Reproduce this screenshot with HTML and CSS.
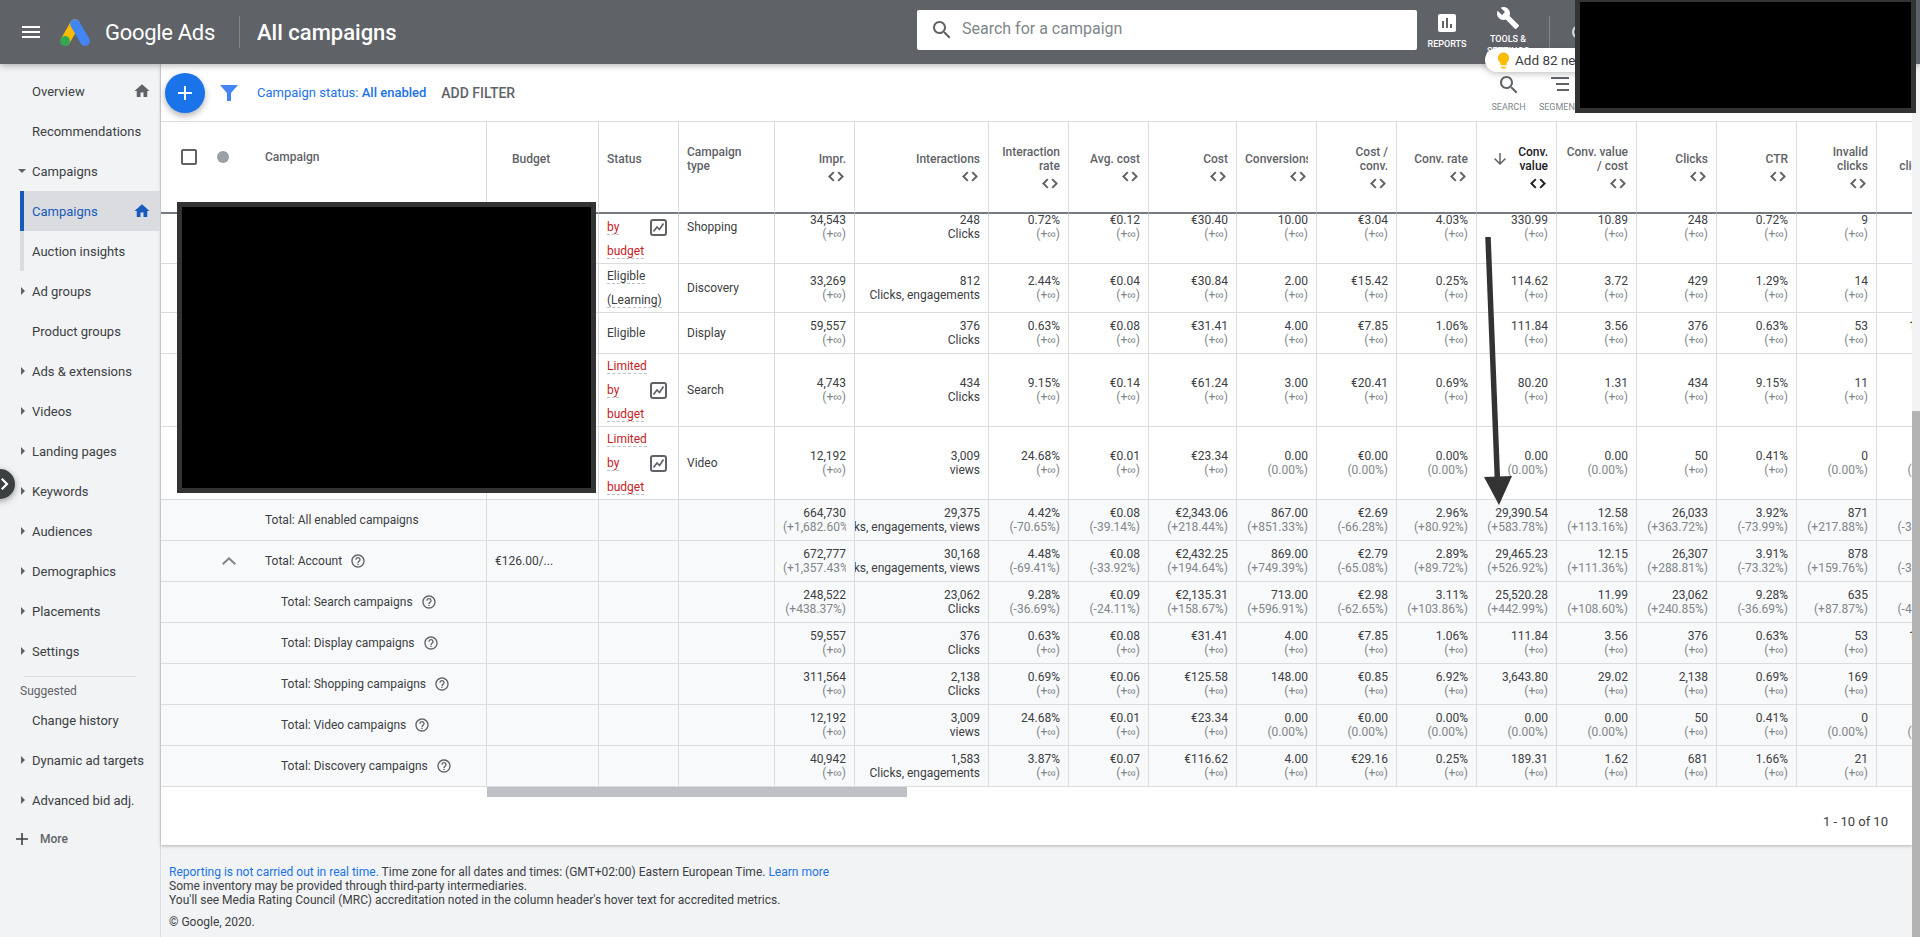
FILE: index.html
```html
<!DOCTYPE html>
<html>
<head>
<meta charset="utf-8">
<title>All campaigns</title>
<link rel="stylesheet" href="styles.css">
</head>
<body>
<svg class="defs">
  <symbol id="i-home" viewBox="0 0 24 24"><path d="M10 20v-6h4v6h5v-8h3L12 3 2 12h3v8z"/></symbol>
  <symbol id="i-help" viewBox="0 0 24 24"><path d="M11 18h2v-2h-2v2zm1-16C6.48 2 2 6.48 2 12s4.48 10 10 10 10-4.48 10-10S17.52 2 12 2zm0 18c-4.41 0-8-3.59-8-8s3.59-8 8-8 8 3.59 8 8-3.59 8-8 8zm0-14c-2.21 0-4 1.79-4 4h2c0-1.1.9-2 2-2s2 .9 2 2c0 2-3 1.75-3 5h2c0-2.25 3-2.5 3-5 0-2.21-1.79-4-4-4z"/></symbol>
  <symbol id="i-search" viewBox="0 0 24 24"><path d="M15.5 14h-.79l-.28-.27C15.41 12.59 16 11.11 16 9.5 16 5.91 13.09 3 9.5 3S3 5.91 3 9.5 5.91 16 9.5 16c1.61 0 3.09-.59 4.23-1.57l.27.28v.79l5 4.99L20.49 19l-4.99-5zm-6 0C7.01 14 5 11.99 5 9.5S7.01 5 9.5 5 14 7.01 14 9.5 11.99 14 9.5 14z"/></symbol>
  <symbol id="i-sort" viewBox="0 0 16 10"><path d="M6 1L2 5l4 4M10 1l4 4-4 4" fill="none" stroke="currentColor" stroke-width="1.8"/></symbol>
  <symbol id="i-trend" viewBox="0 0 17 17"><rect x="1" y="1" width="15" height="15" rx="2" fill="none" stroke="currentColor" stroke-width="2"/><path d="M3.500 12.500l3.500-4.500 2.500 2.500 4-6" fill="none" stroke="currentColor" stroke-width="1.700"/></symbol>
</svg>

<header class="topbar">
  <svg class="burger" viewBox="0 0 18 12"><path d="M0 0h18v2H0zM0 5h18v2H0zM0 10h18v2H0z" fill="#fff"/></svg>
  <svg class="logo" viewBox="0 0 30 27">
    <path d="M15 5L5.500 21.500" stroke="#fbbc04" stroke-width="9.600" stroke-linecap="round"/>
    <path d="M15 5l10 17" stroke="#4285f4" stroke-width="9.600" stroke-linecap="round"/>
    <circle cx="5" cy="22" r="5" fill="#34a853"/>
  </svg>
  <span class="wordmark">Google Ads</span>
  <span class="topbar-sep"></span>
  <span class="page-title">All campaigns</span>
  <div class="searchbox">
    <svg class="searchbox-icon"><use href="#i-search"/></svg>
    <span class="searchbox-text">Search for a campaign</span>
  </div>
  <div class="top-tool">
    <svg class="top-icon" viewBox="0 0 24 24"><path d="M19 3H5c-1.100 0-2 .9-2 2v14c0 1.100.9 2 2 2h14c1.100 0 2-.9 2-2V5c0-1.100-.9-2-2-2zM9 17H7v-7h2v7zm4 0h-2V7h2v10zm4 0h-2v-4h2v4z"/></svg>
    <span>REPORTS</span>
  </div>
  <div class="top-tool top-tool-wide">
    <svg class="wrench" viewBox="0 0 24 24"><path d="M22.7 19l-9.100-9.100c.9-2.300.4-5-1.500-6.900-2-2-5-2.400-7.400-1.300L9 6 6 9 1.600 4.700C.4 7.100.9 10.100 2.900 12.100c1.900 1.900 4.600 2.400 6.900 1.500l9.100 9.100c.4.4 1 .4 1.400 0l2.300-2.300c.5-.4.5-1.100.1-1.400z"/></svg>
    <span>TOOLS &amp;<br>SETTINGS</span>
  </div>
  <span class="topbar-sep topbar-sep-right"></span>
  <span class="top-circle"></span>
</header>

<div class="tip">
  <svg class="tip-bulb" viewBox="0 0 24 24"><path d="M9 21c0 .5.4 1 1 1h4c.6 0 1-.5 1-1v-1H9v1zm3-19C8.100 2 5 5.100 5 9c0 2.400 1.200 4.500 3 5.700V17c0 .5.4 1 1 1h6c.6 0 1-.5 1-1v-2.300c1.800-1.300 3-3.400 3-5.700 0-3.900-3.100-7-7-7z"/></svg>
  Add 82 new keywords
</div>

<div class="below">
  <nav class="sidebar">
    <a class="nav-item">Overview<svg class="nav-home"><use href="#i-home"/></svg></a>
    <a class="nav-item">Recommendations</a>
    <a class="nav-item"><span class="caret caret-down"></span>Campaigns</a>
    <a class="nav-item nav-sub nav-active">Campaigns<svg class="nav-home"><use href="#i-home"/></svg></a>
    <a class="nav-item nav-sub">Auction insights</a>
    <a class="nav-item"><span class="caret"></span>Ad groups</a>
    <a class="nav-item">Product groups</a>
    <a class="nav-item"><span class="caret"></span>Ads &amp; extensions</a>
    <a class="nav-item"><span class="caret"></span>Videos</a>
    <a class="nav-item"><span class="caret"></span>Landing pages</a>
    <a class="nav-item"><span class="caret"></span>Keywords</a>
    <a class="nav-item"><span class="caret"></span>Audiences</a>
    <a class="nav-item"><span class="caret"></span>Demographics</a>
    <a class="nav-item"><span class="caret"></span>Placements</a>
    <a class="nav-item"><span class="caret"></span>Settings</a>
    <div class="nav-divider"></div>
    <div class="nav-title">Suggested</div>
    <a class="nav-item">Change history</a>
    <a class="nav-item"><span class="caret"></span>Dynamic ad targets</a>
    <a class="nav-item"><span class="caret"></span>Advanced bid adj.</a>
    <a class="nav-more"><svg class="nav-plus" viewBox="0 0 12 12"><path d="M5.200 0h1.600v5.200H12v1.600H6.800V12H5.200V6.800H0V5.200h5.200z"/></svg>More</a>
  </nav>

  <main class="main">
    <section class="card">
      <div class="toolbar">
        <span class="fab"><svg viewBox="0 0 14 14"><path d="M6 0h2v6h6v2H8v6H6V8H0V6h6z" fill="#fff"/></svg></span>
        <svg class="funnel" viewBox="0 0 18 16"><path d="M0 0h18l-7 8v8H7V8z"/></svg>
        <span class="filter-text">Campaign status: <b>All enabled</b></span>
        <span class="add-filter">ADD FILTER</span>
        <div class="toolbar-tools">
          <div class="tool"><svg class="tool-icon"><use href="#i-search"/></svg><span>SEARCH</span></div>
          <div class="tool"><svg class="tool-icon" viewBox="0 0 24 24"><path d="M3 4h18v2H3zM8 10h13v2H8zM9 16h12v2H9z"/></svg><span>SEGMENT</span></div>
        </div>
      </div>

      <div class="table-wrap">
        <table class="grid grid-head">
          <colgroup><col class="c-campaign"><col class="c-budget"><col class="c-status"><col class="c-type"><col class="c-num"><col class="c-inter"><col class="c-num"><col class="c-num"><col class="c-cost"><col class="c-num"><col class="c-num"><col class="c-num"><col class="c-num"><col class="c-num"><col class="c-num"><col class="c-num"><col class="c-num"><col class="c-num"></colgroup>
          <tr>
            <th class="th-campaign"><div class="th-select"><span class="checkbox"></span><span class="dot"></span>Campaign</div></th>
            <th class="th-budget"><div class="th-label">Budget</div><div class="sort-gap"></div></th>
            <th class="th-left"><div class="th-label">Status</div><div class="sort-gap"></div></th>
            <th class="th-left"><div class="th-label">Campaign<br>type</div><div class="sort-gap"></div></th>
            <th><div class="th-label">Impr.</div><svg class="sort"><use href="#i-sort"/></svg></th>
            <th><div class="th-label">Interactions</div><svg class="sort"><use href="#i-sort"/></svg></th>
            <th><div class="th-label">Interaction<br>rate</div><svg class="sort"><use href="#i-sort"/></svg></th>
            <th><div class="th-label">Avg. cost</div><svg class="sort"><use href="#i-sort"/></svg></th>
            <th><div class="th-label">Cost</div><svg class="sort"><use href="#i-sort"/></svg></th>
            <th><div class="th-label">Conversions</div><svg class="sort"><use href="#i-sort"/></svg></th>
            <th><div class="th-label">Cost /<br>conv.</div><svg class="sort"><use href="#i-sort"/></svg></th>
            <th><div class="th-label">Conv. rate</div><svg class="sort"><use href="#i-sort"/></svg></th>
            <th class="th-sorted"><svg class="sort-arrow" viewBox="0 0 24 24"><path d="M20 12l-1.410-1.410L13 16.170V4h-2v12.170l-5.580-5.590L4 12l8 8 8-8z"/></svg><div class="th-label">Conv.<br>value</div><svg class="sort"><use href="#i-sort"/></svg></th>
            <th><div class="th-label">Conv. value<br>/ cost</div><svg class="sort"><use href="#i-sort"/></svg></th>
            <th><div class="th-label">Clicks</div><svg class="sort"><use href="#i-sort"/></svg></th>
            <th><div class="th-label">CTR</div><svg class="sort"><use href="#i-sort"/></svg></th>
            <th><div class="th-label">Invalid<br>clicks</div><svg class="sort"><use href="#i-sort"/></svg></th>
            <th><div class="th-label">Invalid<br>click rate</div><svg class="sort"><use href="#i-sort"/></svg></th>
          </tr>
        </table>

        <div class="rows-scroll">
          <table class="grid grid-rows">
            <colgroup><col class="c-campaign"><col class="c-budget"><col class="c-status"><col class="c-type"><col class="c-num"><col class="c-inter"><col class="c-num"><col class="c-num"><col class="c-cost"><col class="c-num"><col class="c-num"><col class="c-num"><col class="c-num"><col class="c-num"><col class="c-num"><col class="c-num"><col class="c-num"><col class="c-num"></colgroup>
            <tr class="row-tall">
              <td></td><td></td>
              <td class="status"><div class="status-in"><span class="status-words"><u class="bad">Limited</u> <u class="bad">by</u> <u class="bad">budget</u></span><svg class="trend"><use href="#i-trend"/></svg></div></td>
              <td class="type">Shopping</td>
              <td><p>34,543</p><small>(+<i>∞</i>)</small></td>
              <td class="inter"><p>248</p><span class="unit">Clicks</span></td>
              <td><p>0.72%</p><small>(+<i>∞</i>)</small></td>
              <td><p>€0.12</p><small>(+<i>∞</i>)</small></td>
              <td><p>€30.40</p><small>(+<i>∞</i>)</small></td>
              <td><p>10.00</p><small>(+<i>∞</i>)</small></td>
              <td><p>€3.04</p><small>(+<i>∞</i>)</small></td>
              <td><p>4.03%</p><small>(+<i>∞</i>)</small></td>
              <td><p>330.99</p><small>(+<i>∞</i>)</small></td>
              <td><p>10.89</p><small>(+<i>∞</i>)</small></td>
              <td><p>248</p><small>(+<i>∞</i>)</small></td>
              <td><p>0.72%</p><small>(+<i>∞</i>)</small></td>
              <td><p>9</p><small>(+<i>∞</i>)</small></td>
              <td><p>3.50%</p><small>(+<i>∞</i>)</small></td>
            </tr>
            <tr class="row-two">
              <td></td><td></td>
              <td class="status"><div class="status-in"><span class="status-words status-words-wide"><u>Eligible</u> <u>(Learning)</u></span></div></td>
              <td class="type">Discovery</td>
              <td><p>33,269</p><small>(+<i>∞</i>)</small></td>
              <td class="inter"><p>812</p><span class="unit">Clicks, engagements</span></td>
              <td><p>2.44%</p><small>(+<i>∞</i>)</small></td>
              <td><p>€0.04</p><small>(+<i>∞</i>)</small></td>
              <td><p>€30.84</p><small>(+<i>∞</i>)</small></td>
              <td><p><u>2.00</u></p><small>(+<i>∞</i>)</small></td>
              <td><p><u>€15.42</u></p><small>(+<i>∞</i>)</small></td>
              <td><p><u>0.25%</u></p><small>(+<i>∞</i>)</small></td>
              <td><p><u>114.62</u></p><small>(+<i>∞</i>)</small></td>
              <td><p><u>3.72</u></p><small>(+<i>∞</i>)</small></td>
              <td><p>429</p><small>(+<i>∞</i>)</small></td>
              <td><p>1.29%</p><small>(+<i>∞</i>)</small></td>
              <td><p>14</p><small>(+<i>∞</i>)</small></td>
              <td><p>3.16%</p><small>(+<i>∞</i>)</small></td>
            </tr>
            <tr class="row-short">
              <td></td><td></td>
              <td class="type">Eligible</td>
              <td class="type">Display</td>
              <td><p>59,557</p><small>(+<i>∞</i>)</small></td>
              <td class="inter"><p>376</p><span class="unit">Clicks</span></td>
              <td><p>0.63%</p><small>(+<i>∞</i>)</small></td>
              <td><p>€0.08</p><small>(+<i>∞</i>)</small></td>
              <td><p>€31.41</p><small>(+<i>∞</i>)</small></td>
              <td><p><u>4.00</u></p><small>(+<i>∞</i>)</small></td>
              <td><p><u>€7.85</u></p><small>(+<i>∞</i>)</small></td>
              <td><p><u>1.06%</u></p><small>(+<i>∞</i>)</small></td>
              <td><p><u>111.84</u></p><small>(+<i>∞</i>)</small></td>
              <td><p><u>3.56</u></p><small>(+<i>∞</i>)</small></td>
              <td><p>376</p><small>(+<i>∞</i>)</small></td>
              <td><p>0.63%</p><small>(+<i>∞</i>)</small></td>
              <td><p>53</p><small>(+<i>∞</i>)</small></td>
              <td><p>12.35%</p><small>(+<i>∞</i>)</small></td>
            </tr>
            <tr class="row-tall">
              <td></td><td></td>
              <td class="status"><div class="status-in"><span class="status-words"><u class="bad">Limited</u> <u class="bad">by</u> <u class="bad">budget</u></span><svg class="trend"><use href="#i-trend"/></svg></div></td>
              <td class="type">Search</td>
              <td><p>4,743</p><small>(+<i>∞</i>)</small></td>
              <td class="inter"><p>434</p><span class="unit">Clicks</span></td>
              <td><p>9.15%</p><small>(+<i>∞</i>)</small></td>
              <td><p>€0.14</p><small>(+<i>∞</i>)</small></td>
              <td><p>€61.24</p><small>(+<i>∞</i>)</small></td>
              <td><p>3.00</p><small>(+<i>∞</i>)</small></td>
              <td><p>€20.41</p><small>(+<i>∞</i>)</small></td>
              <td><p>0.69%</p><small>(+<i>∞</i>)</small></td>
              <td><p>80.20</p><small>(+<i>∞</i>)</small></td>
              <td><p>1.31</p><small>(+<i>∞</i>)</small></td>
              <td><p>434</p><small>(+<i>∞</i>)</small></td>
              <td><p>9.15%</p><small>(+<i>∞</i>)</small></td>
              <td><p>11</p><small>(+<i>∞</i>)</small></td>
              <td><p>2.47%</p><small>(+<i>∞</i>)</small></td>
            </tr>
            <tr class="row-tall">
              <td></td><td></td>
              <td class="status"><div class="status-in"><span class="status-words"><u class="bad">Limited</u> <u class="bad">by</u> <u class="bad">budget</u></span><svg class="trend"><use href="#i-trend"/></svg></div></td>
              <td class="type">Video</td>
              <td><p>12,192</p><small>(+<i>∞</i>)</small></td>
              <td class="inter"><p>3,009</p><span class="unit">views</span></td>
              <td><p>24.68%</p><small>(+<i>∞</i>)</small></td>
              <td><p>€0.01</p><small>(+<i>∞</i>)</small></td>
              <td><p>€23.34</p><small>(+<i>∞</i>)</small></td>
              <td><p>0.00</p><small>(0.00%)</small></td>
              <td><p>€0.00</p><small>(0.00%)</small></td>
              <td><p>0.00%</p><small>(0.00%)</small></td>
              <td><p>0.00</p><small>(0.00%)</small></td>
              <td><p>0.00</p><small>(0.00%)</small></td>
              <td><p>50</p><small>(+<i>∞</i>)</small></td>
              <td><p>0.41%</p><small>(+<i>∞</i>)</small></td>
              <td><p>0</p><small>(0.00%)</small></td>
              <td><p>0.00%</p><small>(0.00%)</small></td>
            </tr>
          </table>
        </div>

        <table class="grid grid-totals">
          <colgroup><col class="c-campaign"><col class="c-budget"><col class="c-status"><col class="c-type"><col class="c-num"><col class="c-inter"><col class="c-num"><col class="c-num"><col class="c-cost"><col class="c-num"><col class="c-num"><col class="c-num"><col class="c-num"><col class="c-num"><col class="c-num"><col class="c-num"><col class="c-num"><col class="c-num"></colgroup>
          <tr class="row-short">
            <td class="total-name">Total: All enabled campaigns</td><td></td><td></td><td></td>
            <td><p>664,730</p><small>(+1,682.60%)</small></td>
            <td class="inter"><p>29,375</p><span class="unit unit-clip"><span>Clicks, engagements, views</span></span></td>
            <td><p>4.42%</p><small>(-70.65%)</small></td>
            <td><p>€0.08</p><small>(-39.14%)</small></td>
            <td><p>€2,343.06</p><small>(+218.44%)</small></td>
            <td><p>867.00</p><small>(+851.33%)</small></td>
            <td><p>€2.69</p><small>(-66.28%)</small></td>
            <td><p>2.96%</p><small>(+80.92%)</small></td>
            <td><p>29,390.54</p><small>(+583.78%)</small></td>
            <td><p>12.58</p><small>(+113.16%)</small></td>
            <td><p>26,033</p><small>(+363.72%)</small></td>
            <td><p>3.92%</p><small>(-73.99%)</small></td>
            <td><p>871</p><small>(+217.88%)</small></td>
            <td><p>3.24%</p><small>(-31.24%)</small></td>
          </tr>
          <tr class="row-short">
            <td class="total-name"><div class="total-in"><svg class="collapse" viewBox="0 0 14 8"><path d="M7 0L0 6.600 1.400 8 7 2.800 12.600 8 14 6.600z"/></svg>Total: Account<svg class="help"><use href="#i-help"/></svg></div></td>
            <td class="budget">€126.00/...</td><td></td><td></td>
            <td><p>672,777</p><small>(+1,357.43%)</small></td>
            <td class="inter"><p>30,168</p><span class="unit unit-clip"><span>Clicks, engagements, views</span></span></td>
            <td><p>4.48%</p><small>(-69.41%)</small></td>
            <td><p>€0.08</p><small>(-33.92%)</small></td>
            <td><p>€2,432.25</p><small>(+194.64%)</small></td>
            <td><p><u>869.00</u></p><small>(+749.39%)</small></td>
            <td><p><u>€2.79</u></p><small>(-65.08%)</small></td>
            <td><p><u>2.89%</u></p><small>(+89.72%)</small></td>
            <td><p><u>29,465.23</u></p><small>(+526.92%)</small></td>
            <td><p><u>12.15</u></p><small>(+111.36%)</small></td>
            <td><p>26,307</p><small>(+288.81%)</small></td>
            <td><p>3.91%</p><small>(-73.32%)</small></td>
            <td><p>878</p><small>(+159.76%)</small></td>
            <td><p>3.23%</p><small>(-38.31%)</small></td>
          </tr>
          <tr class="row-short">
            <td class="total-name total-sub"><div class="total-in">Total: Search campaigns<svg class="help"><use href="#i-help"/></svg></div></td><td></td><td></td><td></td>
            <td><p>248,522</p><small>(+438.37%)</small></td>
            <td class="inter"><p>23,062</p><span class="unit">Clicks</span></td>
            <td><p>9.28%</p><small>(-36.69%)</small></td>
            <td><p>€0.09</p><small>(-24.11%)</small></td>
            <td><p>€2,135.31</p><small>(+158.67%)</small></td>
            <td><p>713.00</p><small>(+596.91%)</small></td>
            <td><p>€2.98</p><small>(-62.65%)</small></td>
            <td><p>3.11%</p><small>(+103.86%)</small></td>
            <td><p>25,520.28</p><small>(+442.99%)</small></td>
            <td><p>11.99</p><small>(+108.60%)</small></td>
            <td><p>23,062</p><small>(+240.85%)</small></td>
            <td><p>9.28%</p><small>(-36.69%)</small></td>
            <td><p>635</p><small>(+87.87%)</small></td>
            <td><p>2.68%</p><small>(-44.93%)</small></td>
          </tr>
          <tr class="row-short">
            <td class="total-name total-sub"><div class="total-in">Total: Display campaigns<svg class="help"><use href="#i-help"/></svg></div></td><td></td><td></td><td></td>
            <td><p>59,557</p><small>(+<i>∞</i>)</small></td>
            <td class="inter"><p>376</p><span class="unit">Clicks</span></td>
            <td><p>0.63%</p><small>(+<i>∞</i>)</small></td>
            <td><p>€0.08</p><small>(+<i>∞</i>)</small></td>
            <td><p>€31.41</p><small>(+<i>∞</i>)</small></td>
            <td><p>4.00</p><small>(+<i>∞</i>)</small></td>
            <td><p>€7.85</p><small>(+<i>∞</i>)</small></td>
            <td><p>1.06%</p><small>(+<i>∞</i>)</small></td>
            <td><p>111.84</p><small>(+<i>∞</i>)</small></td>
            <td><p>3.56</p><small>(+<i>∞</i>)</small></td>
            <td><p>376</p><small>(+<i>∞</i>)</small></td>
            <td><p>0.63%</p><small>(+<i>∞</i>)</small></td>
            <td><p>53</p><small>(+<i>∞</i>)</small></td>
            <td><p>12.35%</p><small>(+<i>∞</i>)</small></td>
          </tr>
          <tr class="row-short">
            <td class="total-name total-sub"><div class="total-in">Total: Shopping campaigns<svg class="help"><use href="#i-help"/></svg></div></td><td></td><td></td><td></td>
            <td><p>311,564</p><small>(+<i>∞</i>)</small></td>
            <td class="inter"><p>2,138</p><span class="unit">Clicks</span></td>
            <td><p>0.69%</p><small>(+<i>∞</i>)</small></td>
            <td><p>€0.06</p><small>(+<i>∞</i>)</small></td>
            <td><p>€125.58</p><small>(+<i>∞</i>)</small></td>
            <td><p>148.00</p><small>(+<i>∞</i>)</small></td>
            <td><p>€0.85</p><small>(+<i>∞</i>)</small></td>
            <td><p>6.92%</p><small>(+<i>∞</i>)</small></td>
            <td><p>3,643.80</p><small>(+<i>∞</i>)</small></td>
            <td><p>29.02</p><small>(+<i>∞</i>)</small></td>
            <td><p>2,138</p><small>(+<i>∞</i>)</small></td>
            <td><p>0.69%</p><small>(+<i>∞</i>)</small></td>
            <td><p>169</p><small>(+<i>∞</i>)</small></td>
            <td><p>7.33%</p><small>(+<i>∞</i>)</small></td>
          </tr>
          <tr class="row-short">
            <td class="total-name total-sub"><div class="total-in">Total: Video campaigns<svg class="help"><use href="#i-help"/></svg></div></td><td></td><td></td><td></td>
            <td><p>12,192</p><small>(+<i>∞</i>)</small></td>
            <td class="inter"><p>3,009</p><span class="unit">views</span></td>
            <td><p>24.68%</p><small>(+<i>∞</i>)</small></td>
            <td><p>€0.01</p><small>(+<i>∞</i>)</small></td>
            <td><p>€23.34</p><small>(+<i>∞</i>)</small></td>
            <td><p>0.00</p><small>(0.00%)</small></td>
            <td><p>€0.00</p><small>(0.00%)</small></td>
            <td><p>0.00%</p><small>(0.00%)</small></td>
            <td><p>0.00</p><small>(0.00%)</small></td>
            <td><p>0.00</p><small>(0.00%)</small></td>
            <td><p>50</p><small>(+<i>∞</i>)</small></td>
            <td><p>0.41%</p><small>(+<i>∞</i>)</small></td>
            <td><p>0</p><small>(0.00%)</small></td>
            <td><p>0.00%</p><small>(0.00%)</small></td>
          </tr>
          <tr class="row-short">
            <td class="total-name total-sub"><div class="total-in">Total: Discovery campaigns<svg class="help"><use href="#i-help"/></svg></div></td><td></td><td></td><td></td>
            <td><p>40,942</p><small>(+<i>∞</i>)</small></td>
            <td class="inter"><p>1,583</p><span class="unit">Clicks, engagements</span></td>
            <td><p>3.87%</p><small>(+<i>∞</i>)</small></td>
            <td><p>€0.07</p><small>(+<i>∞</i>)</small></td>
            <td><p>€116.62</p><small>(+<i>∞</i>)</small></td>
            <td><p>4.00</p><small>(+<i>∞</i>)</small></td>
            <td><p>€29.16</p><small>(+<i>∞</i>)</small></td>
            <td><p>0.25%</p><small>(+<i>∞</i>)</small></td>
            <td><p>189.31</p><small>(+<i>∞</i>)</small></td>
            <td><p>1.62</p><small>(+<i>∞</i>)</small></td>
            <td><p>681</p><small>(+<i>∞</i>)</small></td>
            <td><p>1.66%</p><small>(+<i>∞</i>)</small></td>
            <td><p>21</p><small>(+<i>∞</i>)</small></td>
            <td><p>2.99%</p><small>(+<i>∞</i>)</small></td>
          </tr>
        </table>
      </div>

      <div class="hscroll"><div class="hscroll-thumb"></div></div>
      <div class="pager">1 - 10 of 10</div>
    </section>

    <footer class="foot">
      <div><a>Reporting is not carried out in real time.</a> Time zone for all dates and times: (GMT+02:00) Eastern European Time. <a>Learn more</a></div>
      <div>Some inventory may be provided through third-party intermediaries.</div>
      <div>You'll see Media Rating Council (MRC) accreditation noted in the column header's hover text for accredited metrics.</div>
      <div class="foot-copy">© Google, 2020.</div>
    </footer>
  </main>

  <div class="vscroll"><div class="vscroll-thumb"></div></div>
</div>

<span class="side-toggle"><svg viewBox="0 0 8 12"><path d="M1.500 0L0 1.500 4.500 6 0 10.500 1.500 12l6-6z" fill="#fff"/></svg></span>

<div class="redact redact-top"></div>
<div class="redact redact-names"></div>
<svg class="annot-arrow" viewBox="0 0 40 280">
  <path d="M8 7l9.500 245" stroke="#333" stroke-width="5.500" fill="none"/>
  <path d="M4 247l28-1-13 29z" fill="#333"/>
</svg>
</body>
</html>
```

FILE: styles.css
```css
* {
    box-sizing: border-box;
}

html, body {
    height: 100%;
}

body {
    margin: 0;
    overflow: hidden;
    display: flex;
    flex-direction: column;
    font-family: Roboto, "Liberation Sans", sans-serif;
    font-size: 12px;
    color: #3c4043;
    background: #f1f3f4;
}

.defs {
    display: none;
}

/* top bar */
.topbar {
    position: relative;
    z-index: 3;
    flex: none;
    height: 64px;
    display: flex;
    align-items: center;
    padding: 0 334px 0 22px;
    background: #5f6368;
    box-shadow: 0 2px 6px rgba(60, 64, 67, .35);
    color: #fff;
}

.burger {
    width: 18px;
    height: 12px;
}

.logo {
    width: 30px;
    height: 27px;
    margin-left: 20px;
}

.wordmark {
    margin-left: 15px;
    font-size: 22px;
    letter-spacing: -.3px;
    white-space: nowrap;
}

.topbar-sep {
    width: 1px;
    height: 32px;
    margin-left: 24px;
    background: #80868b;
}

.page-title {
    margin-left: 17px;
    font-size: 22px;
    font-weight: 500;
    white-space: nowrap;
}

.searchbox {
    margin-left: auto;
    margin-bottom: 4px;
    width: 500px;
    height: 40px;
    display: flex;
    align-items: center;
    padding-left: 13px;
    border-radius: 2px;
    background: #fff;
    color: #80868b;
    font-size: 16px;
}

.searchbox-icon {
    width: 24px;
    height: 24px;
    margin-right: 8px;
    fill: #5f6368;
}

.searchbox-text {
    padding-bottom: 3px;
}

.top-tool {
    align-self: flex-start;
    width: 60px;
    padding-top: 11px;
    display: flex;
    flex-direction: column;
    align-items: center;
    font-size: 9px;
    font-weight: 500;
    line-height: 12px;
    text-align: center;
}

.top-tool-wide {
    width: 62px;
    padding-top: 6px;
}

.top-icon {
    width: 24px;
    height: 24px;
    margin-bottom: 3px;
    fill: #fff;
}

.wrench {
    width: 24px;
    height: 24px;
    margin-bottom: 3px;
    fill: #fff;
}

.topbar-sep-right {
    margin-left: 10px;
}

.top-circle {
    width: 14px;
    height: 14px;
    margin-left: 22px;
    border: 2px solid #dadce0;
    border-radius: 50%;
}

.tip {
    position: absolute;
    z-index: 4;
    left: 1485px;
    top: 48px;
    height: 24px;
    display: flex;
    align-items: center;
    padding: 0 16px 0 9px;
    border-radius: 12px;
    background: #fff;
    box-shadow: 0 2px 6px rgba(60, 64, 67, .3);
    font-size: 13.5px;
    white-space: nowrap;
}

.tip-bulb {
    width: 19px;
    height: 19px;
    margin-right: 2px;
    fill: #fbbc04;
}

/* page below the bar */
.below {
    flex: 1;
    min-height: 0;
    display: flex;
}

.sidebar {
    flex: none;
    width: 161px;
    padding-top: 7px;
    border-right: 1px solid #dadce0;
    background: #f1f3f4;
    font-size: 13px;
}

.nav-item {
    position: relative;
    height: 40px;
    display: flex;
    align-items: center;
    padding-left: 32px;
    white-space: nowrap;
}

.nav-sub {
    margin-left: 20px;
    padding-left: 8px;
    border-left: 4px solid #dadce0;
}

.nav-active {
    border-left-color: #185abc;
    background: #dadce0;
    color: #185abc;
}

.nav-home {
    position: absolute;
    right: 9px;
    width: 18px;
    height: 18px;
    fill: #5f6368;
}

.nav-active .nav-home {
    fill: #185abc;
}

.caret {
    position: absolute;
    left: 21px;
    border-left: 4px solid #5f6368;
    border-top: 4px solid transparent;
    border-bottom: 4px solid transparent;
}

.caret-down {
    left: 18px;
    border-top: 4px solid #5f6368;
    border-left: 4px solid transparent;
    border-right: 4px solid transparent;
    border-bottom: 0;
}

.nav-divider {
    height: 1px;
    margin: 5px 24px 0;
    background: #dadce0;
}

.nav-title {
    height: 23px;
    padding: 5px 0 0 20px;
    line-height: 18px;
    font-size: 12px;
    color: #5f6368;
}

.nav-more {
    height: 40px;
    margin-top: -1px;
    display: flex;
    align-items: center;
    padding-left: 16px;
    font-size: 12px;
    font-weight: 500;
    color: #5f6368;
}

.nav-plus {
    width: 12px;
    height: 12px;
    margin-right: 12px;
    fill: #3c4043;
}

.main {
    flex: 1;
    min-width: 0;
    display: flex;
    flex-direction: column;
}

.card {
    flex: none;
    height: 781px;
    background: #fff;
    box-shadow: 0 1px 3px rgba(60, 64, 67, .35);
}

/* toolbar */
.toolbar {
    height: 58px;
    display: flex;
    align-items: center;
    padding: 0 327px 0 4px;
    border-bottom: 1px solid #dadce0;
}

.fab {
    width: 40px;
    height: 40px;
    display: flex;
    align-items: center;
    justify-content: center;
    border-radius: 50%;
    background: #1a73e8;
    box-shadow: 0 3px 6px rgba(60, 64, 67, .4);
}

.fab svg {
    width: 14px;
    height: 14px;
}

.funnel {
    width: 18px;
    height: 16px;
    margin-left: 15px;
    fill: #4285f4;
}

.filter-text {
    margin-left: 19px;
    font-size: 13px;
    color: #1a73e8;
    white-space: nowrap;
}

.filter-text b {
    font-weight: 500;
}

.add-filter {
    margin-left: 15px;
    font-size: 14px;
    font-weight: 500;
    color: #5f6368;
    white-space: nowrap;
}

.toolbar-tools {
    margin-left: auto;
    display: flex;
}

.tool {
    width: 51px;
    display: flex;
    flex-direction: column;
    align-items: center;
    font-size: 9px;
    line-height: 12px;
    color: #80868b;
}

.tool-icon {
    width: 24px;
    height: 24px;
    margin-bottom: 4px;
    fill: #5f6368;
}

/* table */
.table-wrap {
    overflow: hidden;
}

.grid {
    width: 1796px;
    table-layout: fixed;
    border-collapse: separate;
    border-spacing: 0;
}

.c-campaign { width: 326px; }
.c-budget { width: 112px; }
.c-status { width: 80px; }
.c-type { width: 96px; }
.c-num { width: 80px; }
.c-inter { width: 134px; }
.c-cost { width: 88px; }

th, td {
    padding: 0 8px;
    border-right: 1px solid #dadce0;
    border-bottom: 1px solid #dadce0;
    vertical-align: middle;
    text-align: right;
    line-height: 14px;
    overflow: hidden;
}

th {
    position: relative;
    height: 92px;
    padding-top: 3px;
    border-bottom: 2px solid #757b80;
    font-weight: 500;
    color: #5f6368;
}

.th-label {
    white-space: nowrap;
    overflow: hidden;
}

.sort {
    display: block;
    width: 18px;
    height: 11px;
    margin: 5px 1px 4px auto;
    color: #5f6368;
}

.sort-gap {
    height: 20px;
}

.th-left,
.th-budget,
.th-campaign {
    text-align: left;
}

.th-budget {
    padding-left: 25px;
}

.th-campaign {
    padding: 0 0 20px 20px;
}

.th-select {
    display: flex;
    align-items: center;
}

.checkbox {
    width: 16px;
    height: 16px;
    border: 2px solid #5f6368;
    border-radius: 2px;
}

.dot {
    width: 12px;
    height: 12px;
    margin: 0 36px 0 20px;
    border-radius: 50%;
    background: #9aa0a6;
}

.th-sorted {
    color: #202124;
}

.th-sorted .sort {
    color: #202124;
}

.sort-arrow {
    position: absolute;
    left: 14px;
    top: 28px;
    width: 18px;
    height: 18px;
    fill: #5f6368;
}

.rows-scroll {
    height: 286px;
    overflow: hidden;
}

.grid-rows {
    margin-top: -23px;
}

.row-tall { height: 73px; }
.row-two { height: 49px; }
.row-short { height: 41px; }

td p {
    margin: 0;
    white-space: nowrap;
    overflow: hidden;
}

td small {
    display: block;
    font-size: 12px;
    color: #80868b;
    white-space: nowrap;
    overflow: hidden;
}

td small i {
    font-family: "Liberation Sans", sans-serif;
    font-style: normal;
}

td u {
    text-decoration: none;
    border-bottom: 1px dashed #bdc1c6;
}

.type,
.status,
.budget,
.total-name {
    text-align: left;
}

.status {
    line-height: 24px;
}

.status-in {
    display: flex;
    align-items: center;
}

.status-words {
    width: 43px;
    flex: none;
}

.status-words-wide {
    width: 64px;
}

.bad {
    color: #c5221f;
}

.trend {
    width: 17px;
    height: 17px;
    color: #5f6368;
}

.inter {
    padding-left: 0;
}

.unit {
    display: block;
    white-space: nowrap;
}

.unit-clip {
    display: flex;
    justify-content: flex-end;
    overflow: hidden;
}

.unit-clip span {
    flex: none;
}

.grid-totals td {
    background: #f8f9fa;
}

.total-name {
    padding-left: 104px;
}

.total-sub {
    padding-left: 120px;
}

.total-in {
    display: flex;
    align-items: center;
    white-space: nowrap;
}

.collapse {
    width: 14px;
    height: 8px;
    margin: 0 29px 0 -43px;
    fill: #80868b;
}

.help {
    width: 16px;
    height: 16px;
    margin-left: 8px;
    fill: #5f6368;
}

.hscroll {
    height: 11px;
    padding-left: 326px;
}

.hscroll-thumb {
    width: 420px;
    height: 10px;
    background: #bdc1c6;
}

.pager {
    padding: 17px 24px 0 0;
    text-align: right;
    font-size: 13px;
    line-height: 14px;
}

/* footer */
.foot {
    flex: 1;
    padding: 20px 0 0 8px;
    line-height: 14px;
}

.foot a {
    color: #1a73e8;
}

.foot-copy {
    margin-top: 8px;
}

.vscroll {
    flex: none;
    width: 8px;
    padding-top: 347px;
    background: #f1f3f4;
}

.vscroll-thumb {
    height: 100%;
    background: #b3b3b3;
}

/* things lying over the page */
.side-toggle {
    position: absolute;
    z-index: 4;
    left: -15px;
    top: 469px;
    width: 30px;
    height: 30px;
    display: flex;
    align-items: center;
    justify-content: flex-end;
    padding-right: 6px;
    border-radius: 50%;
    background: #3c4043;
    box-shadow: 0 2px 6px rgba(60, 64, 67, .5);
}

.side-toggle svg {
    width: 8px;
    height: 12px;
}

.redact {
    position: absolute;
    z-index: 5;
    border: 5px solid #333;
    background: #000;
}

.redact-top {
    left: 1575px;
    top: -3px;
    width: 341px;
    height: 116px;
}

.redact-names {
    left: 177px;
    top: 202px;
    width: 419px;
    height: 291px;
}

.annot-arrow {
    position: absolute;
    z-index: 5;
    left: 1480px;
    top: 230px;
    width: 40px;
    height: 280px;
}
```
